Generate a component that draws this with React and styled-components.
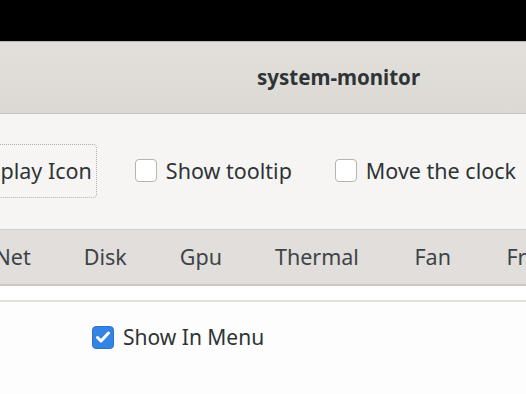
import React from "react";
import styled, { createGlobalStyle } from "styled-components";

const Global = createGlobalStyle`
  body {
    margin: 0;
    background: #000;
    font-family: "Noto Sans", "DejaVu Sans", sans-serif;
  }
`;

const Screen = styled.div`
  width: 526px;
  height: 394px;
  overflow: hidden;
  display: flex;
  flex-direction: column;
  background: #000;
`;

const TopGap = styled.div`
  height: 41px;
  flex: none;
`;

const TitleBar = styled.div`
  height: 73px;
  flex: none;
  background: linear-gradient(#e3e0dc, #dcd8d4);
  border-top: 1px solid #b8b3ad;
  border-bottom: 1px solid #c8c3be;
  display: flex;
  align-items: center;
  padding-left: 257px;
  padding-bottom: 2px;
  box-sizing: border-box;
`;

const Title = styled.div`
  font-weight: 700;
  font-size: 20.5px;
  color: #2e3436;
`;

const Body = styled.div`
  flex: 1;
  background: #f6f5f4;
  display: flex;
  flex-direction: column;
`;

const Toolbar = styled.div`
  height: 115px;
  display: flex;
  align-items: center;
  padding-bottom: 2px;
  box-sizing: border-box;
`;

const FocusButton = styled.div`
  height: 54px;
  margin-left: -42px;
  margin-right: 38px;
  padding: 0 4px 0 10px;
  display: flex;
  align-items: center;
  border: 1px dotted #b3aea8;
  border-radius: 4px;
  font-size: 21.5px;
  color: #2e3436;
  box-sizing: border-box;
  white-space: nowrap;
`;

const Check = styled.label`
  display: flex;
  align-items: center;
  gap: 9px;
  font-size: ${({ size }) => size || 21.5}px;
  color: #2e3436;
  white-space: nowrap;
  margin-right: ${({ space }) => space || 0}px;
`;

const Box = styled.span`
  width: 22px;
  height: 23px;
  box-sizing: border-box;
  border-radius: 4px;
  border: 1px solid ${({ checked }) => (checked ? "#2b73cc" : "#b9b3ad")};
  background: ${({ checked }) => (checked ? "#3584e4" : "#fff")};
  display: flex;
  align-items: center;
  justify-content: center;
  flex: none;
`;

const Tabs = styled.div`
  height: 57px;
  flex: none;
  background: #e1dedb;
  border-top: 1px solid #d2cdc8;
  border-bottom: 2px solid #cdc7c2;
  display: flex;
  align-items: center;
  margin-left: -32px;
  padding-bottom: 2px;
  box-sizing: border-box;
`;

const Tab = styled.div`
  padding: 0 ${({ pad }) => pad || 26.5}px;
  font-size: 21.5px;
  color: #3d4447;
  white-space: nowrap;
`;

const Strip = styled.div`
  height: 14px;
  flex: none;
  background: #fff;
  border-bottom: 2px solid #e3dfdb;
`;

const Page = styled.div`
  flex: 1;
  background: #fdfdfd;
  padding: 21px 0 0 92px;
`;

const CheckMark = () => (
  <svg width="16" height="14" viewBox="0 0 16 14">
    <path
      d="M2.5 7.5 L6 11 L13.5 3"
      fill="none"
      stroke="#fff"
      strokeWidth="3"
      strokeLinecap="round"
      strokeLinejoin="round"
    />
  </svg>
);

const tabs = [
  { name: "Net" },
  { name: "Disk" },
  { name: "Gpu" },
  { name: "Thermal" },
  { name: "Fan", pad: 29 },
  { name: "Freq" },
];

export default function App() {
  return (
    <Screen>
      <Global />
      <TopGap />
      <TitleBar>
        <Title>system-monitor</Title>
      </TitleBar>
      <Body>
        <Toolbar>
          <FocusButton>Display Icon</FocusButton>
          <Check space={43}>
            <Box />
            Show tooltip
          </Check>
          <Check>
            <Box />
            Move the clock
          </Check>
        </Toolbar>
        <Tabs>
          {tabs.map((t) => (
            <Tab key={t.name} pad={t.pad}>
              {t.name}
            </Tab>
          ))}
        </Tabs>
        <Strip />
        <Page>
          <Check size={21}>
            <Box checked>
              <CheckMark />
            </Box>
            Show In Menu
          </Check>
        </Page>
      </Body>
    </Screen>
  );
}
